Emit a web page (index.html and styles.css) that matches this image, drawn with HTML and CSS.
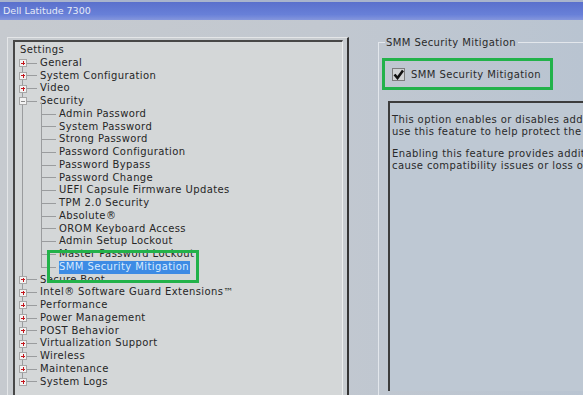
FILE: index.html
```html
<!DOCTYPE html>
<html lang="en">
<head>
  <meta charset="UTF-8" />
  <title>Dell Latitude 7300</title>
  <link rel="stylesheet" href="styles.css">
</head>
<body>

<header class="titlebar">Dell Latitude 7300</header>

<div class="screen">

  <!-- Settings tree -->
  <div class="panel">
    <div class="panel-inner">
      <div class="root">Settings</div>
      <ul class="tree">
        <li><div class="node"><span class="exp plus"></span><span class="twig"></span><span class="label">General</span></div></li>
        <li><div class="node"><span class="exp plus"></span><span class="twig"></span><span class="label">System Configuration</span></div></li>
        <li><div class="node"><span class="exp plus"></span><span class="twig"></span><span class="label">Video</span></div></li>
        <li>
          <div class="node"><span class="exp minus"></span><span class="twig"></span><span class="label">Security</span></div>
          <ul class="sub">
            <li class="leaf"><span class="twig long"></span><span class="label">Admin Password</span></li>
            <li class="leaf"><span class="twig long"></span><span class="label">System Password</span></li>
            <li class="leaf"><span class="twig long"></span><span class="label">Strong Password</span></li>
            <li class="leaf"><span class="twig long"></span><span class="label">Password Configuration</span></li>
            <li class="leaf"><span class="twig long"></span><span class="label">Password Bypass</span></li>
            <li class="leaf"><span class="twig long"></span><span class="label">Password Change</span></li>
            <li class="leaf"><span class="twig long"></span><span class="label">UEFI Capsule Firmware Updates</span></li>
            <li class="leaf"><span class="twig long"></span><span class="label">TPM 2.0 Security</span></li>
            <li class="leaf"><span class="twig long"></span><span class="label">Absolute®</span></li>
            <li class="leaf"><span class="twig long"></span><span class="label">OROM Keyboard Access</span></li>
            <li class="leaf"><span class="twig long"></span><span class="label">Admin Setup Lockout</span></li>
            <li class="leaf"><span class="twig long"></span><span class="label">Master Password Lockout</span></li>
            <li class="leaf"><span class="twig long"></span><span class="label selected">SMM Security Mitigation</span></li>
          </ul>
        </li>
        <li><div class="node"><span class="exp plus"></span><span class="twig"></span><span class="label">Secure Boot</span></div></li>
        <li><div class="node"><span class="exp plus"></span><span class="twig"></span><span class="label">Intel® Software Guard Extensions™</span></div></li>
        <li><div class="node"><span class="exp plus"></span><span class="twig"></span><span class="label">Performance</span></div></li>
        <li><div class="node"><span class="exp plus"></span><span class="twig"></span><span class="label">Power Management</span></div></li>
        <li><div class="node"><span class="exp plus"></span><span class="twig"></span><span class="label">POST Behavior</span></div></li>
        <li><div class="node"><span class="exp plus"></span><span class="twig"></span><span class="label">Virtualization Support</span></div></li>
        <li><div class="node"><span class="exp plus"></span><span class="twig"></span><span class="label">Wireless</span></div></li>
        <li><div class="node"><span class="exp plus"></span><span class="twig"></span><span class="label">Maintenance</span></div></li>
        <li><div class="node"><span class="exp plus"></span><span class="twig"></span><span class="label">System Logs</span></div></li>
      </ul>
      <!-- highlight around selected item -->
      <div class="mark tree-mark"></div>
    </div>
  </div>

  <!-- Option detail -->
  <fieldset class="group">
    <legend>SMM Security Mitigation</legend>
    <div class="mark option">
      <span class="check">
        <svg width="11" height="11" viewBox="0 0 11 11"><path d="M1.5 5.5 L4.5 9 L10 1.5" fill="none" stroke="#111" stroke-width="2.6"/></svg>
      </span>
      <span>SMM Security Mitigation</span>
    </div>
    <div class="desc">
      <p>This option enables or disables additional UEFI SMM Security Mitigation protections. The operating system can<br>use this feature to help protect the secure environment created by virtualization based security.</p>
      <p>Enabling this feature provides additional UEFI SMM Security Mitigation protections. However, this feature may<br>cause compatibility issues or loss of functionality with some legacy tools and applications.</p>
    </div>
  </fieldset>

</div>

</body>
</html>
```

FILE: styles.css
```css
* {
  box-sizing: border-box;
}

body {
  margin: 0;
  width: 583px;
  height: 395px;
  overflow: hidden;
  font-family: 'DejaVu Sans', sans-serif;
  font-size: 10px;
  letter-spacing: 0.4px;
  color: #262626;
  background: linear-gradient(to right, #c6cacf, #c2c8d0 55%, #b9c4d1);
}

.titlebar {
  height: 20px;
  padding: 3px 0 0 3px;
  border-top: 2px solid #a9b4cc;
  background: linear-gradient(to bottom, #5a70cc, #6880d8 70%, #8496dc);
  color: #e6ebf7;
  font-size: 9.5px;
  letter-spacing: 0;
}

.screen {
  display: flex;
  align-items: flex-start;
  padding-top: 17px;
}

/* Settings panel */
.panel {
  margin-left: 7px;
  width: 342px;
  height: 358px;
  padding: 2px 4px 0 5px;
  background: #c8ccd0;
  border-top: 1px solid #e4e6e8;
  border-left: 1px solid #e4e6e8;
  border-right: 2px solid #353535;
}

.panel-inner {
  position: relative;
  height: 100%;
  padding-top: 2px;
  background: #d4d7d8;
  border-top: 2px solid #474747;
  border-left: 2px solid #474747;
  border-right: 1px solid #eceeee;
}

.root,
.node,
.leaf {
  height: 12.75px;
  line-height: 12.75px;
  white-space: nowrap;
}

.root {
  padding-left: 5px;
}

.tree,
.sub {
  position: relative;
  list-style: none;
  margin: 0;
  padding: 0;
}

.tree::before {
  content: '';
  position: absolute;
  left: 7px;
  top: 6px;
  bottom: 6px;
  border-left: 1px solid #9a9c9e;
}

.sub::before {
  content: '';
  position: absolute;
  left: 26px;
  top: -5px;
  bottom: 6px;
  border-left: 1px solid #9a9c9e;
}

.node {
  display: flex;
  align-items: center;
  padding-left: 4px;
}

.leaf {
  display: flex;
  align-items: center;
  padding-left: 26px;
}

.exp {
  position: relative;
  width: 8px;
  height: 8px;
  flex: none;
  background: #f2f2f2;
  border: 1px solid #a6a6a6;
}

.exp::before,
.exp::after {
  content: '';
  position: absolute;
  background: #c4161c;
}

.exp::before {
  left: 1px;
  top: 2.5px;
  width: 4px;
  height: 1px;
}

.plus::after {
  left: 2.5px;
  top: 1px;
  width: 1px;
  height: 4px;
}

.minus::before {
  background: #8a8a8a;
}

.twig {
  width: 10px;
  flex: none;
  border-top: 1px solid #9a9c9e;
  margin-right: 3px;
}

.twig.long {
  width: 15px;
}

.label.selected {
  background: #3d8be4;
  color: #d6eaff;
  padding-right: 1px;
}

/* green annotation boxes */
.mark {
  border: 3px solid #22b24a;
}

.tree-mark {
  position: absolute;
  left: 32px;
  top: 208px;
  width: 152px;
  height: 33px;
}

/* Right side */
.group {
  flex: 1;
  margin: 0 0 0 29px;
  padding: 10px 0 0 3px;
  height: 360px;
  border: 1px solid #e3e7ec;
  border-right: none;
  border-bottom: none;
  min-width: 0;
}

.group legend {
  padding: 0 2px 0 1px;
  margin-left: 3px;
  color: #2a2a2a;
}

.option {
  display: flex;
  align-items: center;
  width: 171px;
  height: 32px;
  padding-left: 7px;
  color: #2a2a2a;
}

.check {
  width: 13px;
  height: 13px;
  margin-right: 6px;
  display: flex;
  align-items: center;
  justify-content: center;
  background: #d0d2d4;
  border: 1px solid #7c7c7c;
}

.desc {
  margin: 11px 0 0 6px;
  height: 290px;
  padding: 11px 0 0 2px;
  background: #bec8d3;
  border-top: 2px solid #3c3c3c;
  border-left: 2px solid #3c3c3c;
  white-space: nowrap;
  overflow: hidden;
  color: #2a2a2a;
  line-height: 12px;
}

.desc p {
  margin: 0 0 10px;
}
```
